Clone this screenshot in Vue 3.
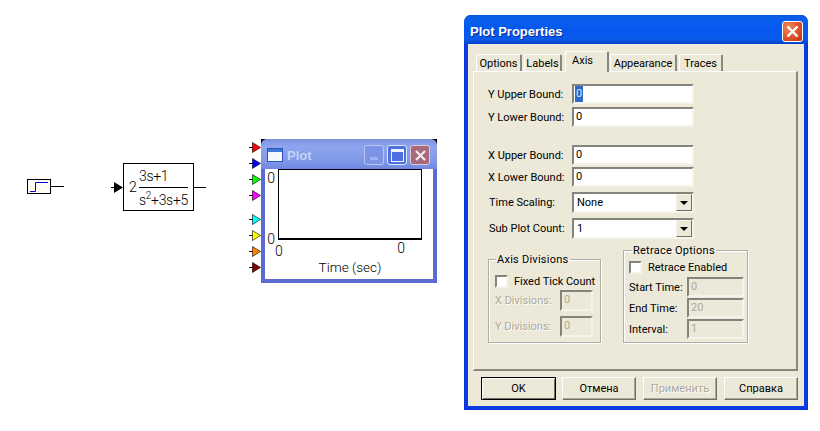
<script setup>
const colors = ['#ff0000', '#0000ff', '#00ff00', '#ff00ff', null, '#00ffff', '#ffff00', '#ff8000', '#800000']
const yFields = [{ label: 'Y Upper Bound:', value: '0', sel: true }, { label: 'Y Lower Bound:', value: '0' }]
const xFields = [{ label: 'X Upper Bound:', value: '0' }, { label: 'X Lower Bound:', value: '0' }]
const combos = [{ label: 'Time Scaling:', value: 'None' }, { label: 'Sub Plot Count:', value: '1' }]
const tabs = [{ t: 'Options', c: 'options' }, { t: 'Labels', c: 'labels' }, { t: 'Axis', c: 'active' }, { t: 'Appearance', c: 'appearance' }, { t: 'Traces', c: 'traces' }]
const retrace = [{ label: 'Start Time:', value: '0' }, { label: 'End Time:', value: '20' }, { label: 'Interval:', value: '1' }]
const buttons = [{ t: 'OK', cls: 'def' }, { t: 'Отмена' }, { t: 'Применить', cls: 'dis' }, { t: 'Справка' }]
</script>

<template>
  <div class="canvas">
    <!-- step source -->
    <div class="node step">
      <div class="stepbox">
        <svg width="22" height="13" viewBox="0 0 22 13"><path d="M2 11.5H7.5V2.5H20" fill="none" stroke="#0000e0" stroke-width="1"/></svg>
      </div>
      <span class="wire w13"></span>
    </div>

    <!-- transfer function -->
    <div class="node tf">
      <svg class="inport" width="12" height="13" viewBox="0 0 12 13"><path d="M0 6.5H4" stroke="#000"/><path d="M3 1L12 6.5L3 12Z" fill="#000"/></svg>
      <div class="tfbox">
        <span class="gain">2</span>
        <div class="frac">
          <span class="num">3s+1</span>
          <span class="den">s<sup>2</sup>+3s+5</span>
        </div>
      </div>
      <span class="wire w12"></span>
    </div>

    <!-- plot block -->
    <div class="node plotnode">
      <div class="ports">
        <template v-for="(c, i) in colors" :key="i">
          <span v-if="!c" class="portgap"></span>
          <svg v-else width="12" height="11" viewBox="0 0 12 11"><path d="M0 5.5H4" stroke="#000"/><path d="M3.5 .5L11.5 5.5L3.5 10.5Z" :fill="c" stroke="#000" stroke-width=".6"/></svg>
        </template>
      </div>
      <div class="plotwin">
        <div class="ptitle">
          <svg class="picon" width="16" height="14" viewBox="0 0 16 14"><rect x=".5" y=".5" width="15" height="13" fill="#f4f7ff" stroke="#2b55b5"/><rect x="1" y="1" width="14" height="3" fill="#3c78d8"/></svg>
          <span class="ptext">Plot</span>
          <span class="pbtn pmin"><i></i></span>
          <span class="pbtn pmax"><i></i></span>
          <span class="pbtn pclose">
            <svg width="13" height="13" viewBox="0 0 13 13"><path d="M2 2L11 11M11 2L2 11" stroke="#f4eef0" stroke-width="2.2"/></svg>
          </span>
        </div>
        <div class="pclient">
          <div class="pleft"><span>0</span><span>0</span></div>
          <div class="pright">
            <div class="pframe"></div>
            <div class="xticks"><span>0</span><span>0</span></div>
            <div class="xlabel">Time (sec)</div>
          </div>
        </div>
      </div>
    </div>

    <!-- dialog -->
    <div class="dialog">
      <div class="dtitle">
        <span class="dtext">Plot Properties</span>
        <span class="dclose">
          <svg width="15" height="15" viewBox="0 0 15 15"><path d="M2.5 2.5L12.5 12.5M12.5 2.5L2.5 12.5" stroke="#fff" stroke-width="2.4"/></svg>
        </span>
      </div>
      <div class="dbody">
        <div class="tabs">
          <span v-for="t in tabs" :key="t.t" class="tab" :class="t.c">{{ t.t }}</span>
        </div>
        <div class="panel">
          <div class="rows r1">
            <div v-for="f in yFields" :key="f.label" class="row">
              <label>{{ f.label }}</label>
              <div class="inp"><span :class="{ sel: f.sel }">{{ f.value }}</span></div>
            </div>
          </div>
          <div class="rows r2">
            <div v-for="f in xFields" :key="f.label" class="row">
              <label>{{ f.label }}</label>
              <div class="inp"><span>{{ f.value }}</span></div>
            </div>
          </div>
          <div class="rows r3">
            <div v-for="f in combos" :key="f.label" class="row">
              <label class="in">{{ f.label }}</label>
              <div class="inp combo">
                <span>{{ f.value }}</span>
                <b class="arrow"><i></i></b>
              </div>
            </div>
          </div>
          <div class="groups">
            <fieldset class="grp axisdiv">
              <legend>Axis Divisions</legend>
              <div class="chk"><span class="box"></span>Fixed Tick Count</div>
              <div class="grow dis"><label>X Divisions:</label><div class="inp small"><span>0</span></div></div>
              <div class="grow dis gap"><label>Y Divisions:</label><div class="inp small"><span>0</span></div></div>
            </fieldset>
            <fieldset class="grp retrace">
              <legend>Retrace Options</legend>
              <div class="chk"><span class="box"></span>Retrace Enabled</div>
              <div class="rlist">
                <div v-for="f in retrace" :key="f.label" class="grow">
                  <label>{{ f.label }}</label>
                  <div class="inp small wide"><span>{{ f.value }}</span></div>
                </div>
              </div>
            </fieldset>
          </div>
        </div>
        <div class="buttons">
          <span v-for="b in buttons" :key="b.t" class="btn" :class="b.cls">{{ b.t }}</span>
        </div>
      </div>
    </div>
  </div>
</template>

<style>
html, body { margin: 0; background: #fff; }
</style>

<style scoped>
.canvas {
  position: relative;
  width: 820px;
  height: 431px;
  overflow: hidden;
  background: #fff;
  font-family: Roboto, "Liberation Sans", sans-serif;
  font-size: 11px;
  color: #000;
}
.node { position: absolute; display: flex; align-items: center; }
.wire { display: block; height: 1px; background: #000; }
.w12 { width: 12px; }
.w13 { width: 13px; }

.step { left: 27px; top: 179px; }
.stepbox { width: 22px; height: 13px; border: 1px solid #000; background: #fffdf4; display: flex; overflow: hidden; }

.tf { left: 111px; top: 163px; }
.inport { display: block; }
.tfbox {
  width: 69px; height: 46px; border: 1px solid #000; background: #fff;
  display: flex; align-items: center; font-size: 14px; font-weight: 300;
}
.gain { margin-left: 5px; width: 10px; }
.frac { display: flex; flex-direction: column; align-items: stretch; width: 49px; }
.num { display: block; border-bottom: 1px solid #000; line-height: 15px; padding-top: 2px; box-sizing: border-box; height: 21px; letter-spacing: -.3px; }
.den { display: block; height: 20px; line-height: 25px; white-space: nowrap; letter-spacing: -.3px; }
.den sup { font-size: 10px; line-height: 0; vertical-align: 6px; }

.plotnode { left: 249px; top: 139px; align-items: flex-start; }
.ports { display: flex; flex-direction: column; gap: 5px; padding-top: 3px; width: 12px; }
.ports svg { display: block; }
.portgap { height: 3px; }
.plotwin {
  width: 176px; height: 144px; box-sizing: border-box;
  background: linear-gradient(#000 0 6px, #5a6cd0 6px);
  padding: 0 4px 4px; display: flex; flex-direction: column;
}
.ptitle {
  height: 30px; flex: none; display: flex; align-items: center; box-sizing: border-box;
  background: linear-gradient(180deg, #7e8fe0 0%, #8ea6ee 25%, #7f97e8 75%, #7088e0 100%);
  margin: 0 -4px; padding: 2px 7px 0 6px; border-radius: 6px 6px 0 0;
}
.picon { margin-right: 4px; }
.ptext { font-family: "Liberation Sans", sans-serif; font-weight: 700; font-size: 13px; color: #c6d3f6; flex: 1; }
.pbtn { width: 20px; height: 20px; margin-left: 3px; border: 1px solid #b9c6f2; border-radius: 3px; box-sizing: border-box; display: flex; align-items: center; justify-content: center; }
.pmin { background: #7d94e6; }
.pmin i { width: 8px; height: 3px; background: #9fb1ee; margin-top: 7px; }
.pmax { background: #4f70e0; border-color: #dfe6fb; }
.pmax i { width: 11px; height: 9px; border: 1px solid #f0f3fd; border-top-width: 3px; }
.pclose { background: #a86a78; border-color: #dccbd8; }

.pclient { flex: 1; background: #fff; display: flex; font-size: 14px; font-weight: 300; }
.pleft { width: 13px; display: flex; flex-direction: column; justify-content: space-between; height: 75px; line-height: 14px; text-align: right; margin-top: 2px; }
.pleft span { display: block; padding-right: 3px; }
.pright { flex: 1; padding-right: 11px; }
.pframe { width: 144px; height: 71px; box-sizing: border-box; border: 1px solid #000; border-width: 1px 1px 2px 1px; background: #fff; }
.xticks { display: flex; justify-content: space-between; height: 15px; line-height: 15px; margin-top: 1px; margin-left: -3px; padding-right: 17px; }
.xticks span:first-child { margin-top: 3px; }
.xlabel { text-align: center; font-size: 13.5px; line-height: 15px; margin-top: 4px; }

.dialog {
  position: absolute; left: 464px; top: 15px; width: 344px; height: 395px;
  box-sizing: border-box; padding: 0 3px 3px; background: #0a3ee0;
  border-radius: 7px 7px 0 0; display: flex; flex-direction: column;
  border-left: 1px solid #0831d9; border-right: 1px solid #0831d9; border-bottom: 1px solid #0831d9;
}
.dtitle {
  height: 29px; flex: none; display: flex; align-items: center; justify-content: space-between;
  margin: 0 -4px; padding: 3px 5px 0 6px; box-sizing: border-box; border-radius: 7px 7px 0 0;
  background: linear-gradient(180deg, #0a57e0 0%, #0a5fe8 12%, #0458f0 50%, #0a5ae8 85%, #0440c8 100%);
}
.dtext { font-family: "Liberation Sans", sans-serif; font-weight: 700; font-size: 13px; color: #fff; text-shadow: 1px 1px 0 #0a2a9a; }
.dclose {
  width: 21px; height: 21px; box-sizing: border-box; border: 1px solid #fff; border-radius: 3px;
  background: radial-gradient(circle at 30% 30%, #ef8a5e, #d8441c 70%, #c03410);
  display: flex; align-items: center; justify-content: center;
}
.dbody { flex: 1; background: #ece9d8; padding: 6px 6px 0 5px; position: relative; display: flex; flex-direction: column; }
.tabs { display: flex; height: 21px; padding-left: 3px; align-items: flex-end; flex: none; }
.tab {
  height: 17px; line-height: 17px; box-sizing: border-box; text-align: center;
  border: 1px solid #fff; border-bottom: 0; border-right: 2px solid #8a887c; border-radius: 2px 2px 0 0;
  white-space: nowrap;
}
.options { width: 46px; margin-right: 2px; }
.labels { width: 38px; margin-right: 3px; }
.appearance { width: 67px; margin-right: 2px; }
.traces { width: 44px; }
.tab.active {
  width: 44px; height: 21px; margin: 0 1px -1px 0; padding-left: 6px; text-align: left; line-height: 17px;
  position: relative; z-index: 1; background: #ece9d8;
}
.panel {
  height: 300px; flex: none; box-sizing: border-box; border: 1px solid #fff;
  border-right: 2px solid #8a887c; border-bottom: 2px solid #8a887c;
  padding: 12px 0 0 0;
}
.rows { display: flex; flex-direction: column; }
.r1 { gap: 3px; }
.r2 { gap: 2px; margin-top: 18px; }
.r3 { gap: 5px; margin-top: 5px; }
.row { display: flex; align-items: center; }
.row label { width: 98px; padding-left: 14px; box-sizing: border-box; white-space: nowrap; }
.row label.in { padding-left: 15px; }
.inp {
  position: relative; width: 122px; height: 20px; box-sizing: border-box; background: #fff;
  border: 2px solid; border-color: #85847c #f6f4ea #f6f4ea #85847c; line-height: 15px; padding-left: 2px; font-size: 11px;
}
.combo { height: 21px; line-height: 17px; padding-left: 3px; }
.sel { background: #316ac5; color: #d8e4fa; padding: 0 1px; margin-left: -1px; display: inline-block; height: 16px; }
.arrow {
  position: absolute; right: 0; top: 0; width: 16px; height: 17px; box-sizing: border-box;
  background: #ece9d8; border: 1px solid; border-color: #f6f4ea #6f6e68 #6f6e68 #f6f4ea;
  display: flex; align-items: center; justify-content: center;
}
.arrow i { width: 0; height: 0; border-left: 4px solid transparent; border-right: 4px solid transparent; border-top: 4px solid #000; }

.groups { display: flex; align-items: flex-end; margin-top: 4px; padding-left: 14px; }
.grp {
  margin: 0; box-sizing: border-box; padding: 0; border: 1px solid #b0afa6;
  box-shadow: 1px 1px 0 #fff, inset 1px 1px 0 #fff; min-width: 0;
}
.grp legend { padding: 0 1px; height: 14px; line-height: 16px; white-space: nowrap; letter-spacing: .25px; }
.axisdiv legend { margin-left: 1px; }
.retrace legend { margin-left: 3px; }
.axisdiv { width: 113px; height: 91px; padding: 8px 0 0 6px; }
.retrace { width: 125px; height: 100px; margin-left: 22px; padding: 3px 0 0 5px; }
.chk { display: flex; align-items: center; height: 14px; white-space: nowrap; font-size: 11px; }
.box {
  width: 13px; height: 13px; box-sizing: border-box; background: #fff; margin-right: 6px; flex: none;
  border: 2px solid; border-color: #85847c #f6f4ea #f6f4ea #85847c;
}
.grow { display: flex; align-items: center; margin-top: 2px; }
.grow.gap { margin-top: 5px; }
.grow label { width: 58px; flex: none; white-space: nowrap; }
.rlist { margin-top: 3px; display: flex; flex-direction: column; gap: 1px; }
.rlist .grow { margin-top: 0; }
.axisdiv .grow label { width: 65px; }
.dis { color: #a5a398; }
.dis label { text-shadow: 1px 1px 0 #fff; color: #aca899; }
.inp.small { width: 33px; height: 21px; background: #ece9d8; color: #aca899; }
.inp.wide { width: 57px; height: 20px; }

.buttons { display: flex; justify-content: flex-end; gap: 7px; margin-top: 6px; }
.btn {
  width: 74px; height: 23px; box-sizing: border-box; display: flex; align-items: center; justify-content: center;
  border: 1px solid; border-color: #fff #716f64 #716f64 #fff; box-shadow: inset -1px -1px 0 #aca899;
  font-size: 11px;
}
.btn.def { width: 75px; margin-right: -1px; border: 1px solid #000; box-shadow: inset 1px 1px 0 #fff, inset -1px -1px 0 #716f64; }
.btn.dis { color: #aca899; text-shadow: 1px 1px 0 #fff; }
</style>
